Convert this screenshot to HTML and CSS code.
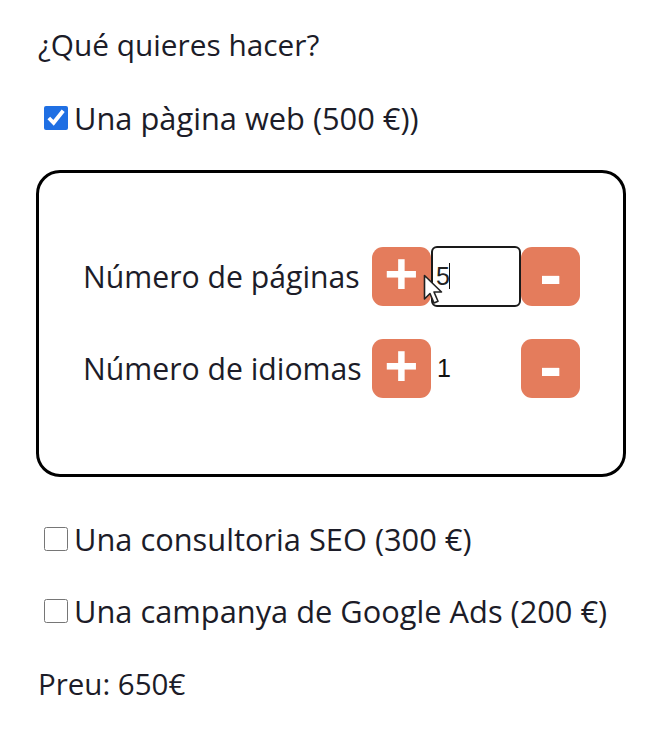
FILE: index.html
```html
<!DOCTYPE html>
<html lang="es">
<head>
<meta charset="utf-8">
<title>Pressupost</title>
<link rel="stylesheet" href="styles.css">
</head>
<body>
<main class="page">
  <p class="question">¿Qué quieres hacer?</p>

  <label class="option">
    <input type="checkbox" class="check" checked>
    <span>Una pàgina web (500 €))</span>
  </label>

  <section class="panel">
    <div class="row">
      <span class="row-label">Número de páginas</span>
      <button class="btn btn-plus" type="button">+</button>
      <span class="value-cell">
        <input class="value-input" type="text" value="5">
        <span class="caret" aria-hidden="true"></span>
        <svg class="cursor" width="22" height="34" viewBox="0 0 22 34" aria-hidden="true">
          <path d="M1.5 1.5 L1.5 25 L7 19.5 L11 29 L15 27.3 L11 18 L18.5 18 Z" fill="#fff" stroke="#222" stroke-width="1.6" stroke-linejoin="round"/>
        </svg>
      </span>
      <button class="btn btn-minus" type="button">-</button>
    </div>
    <div class="row">
      <span class="row-label">Número de idiomas</span>
      <button class="btn btn-plus" type="button">+</button>
      <span class="value-cell"><span class="value-text">1</span></span>
      <button class="btn btn-minus" type="button">-</button>
    </div>
  </section>

  <label class="option option-plain">
    <input type="checkbox" class="check">
    <span>Una consultoria SEO (300 €)</span>
  </label>

  <label class="option option-plain">
    <input type="checkbox" class="check">
    <span>Una campanya de Google Ads (200 €)</span>
  </label>

  <p class="price">Preu: 650€</p>
</main>
</body>
</html>
```
FILE: styles.css
```css
* { box-sizing: border-box; }

html, body {
  margin: 0;
  padding: 0;
  background: #fff;
}

body {
  font-family: "Open Sans", "Noto Sans", "Liberation Sans", sans-serif;
  font-size: 29.8px;
  color: #1c1c28;
}

.page {
  padding: 28px 0 0 38px;
  width: 666px;
}

.question {
  margin: 0;
  line-height: 34px;
}

.option {
  display: flex;
  align-items: center;
  gap: 6px;
  height: 34px;
  margin: 39px 0 0 6px;
  font-size: 30.8px;
  white-space: nowrap;
}

.check {
  width: 24px;
  height: 24px;
  margin: 0;
  flex: none;
  accent-color: #1f6fe3;
}

.panel {
  margin: 35px 0 0 -2px;
  width: 590px;
  height: 307px;
  border: 3px solid #000;
  border-radius: 24px;
  padding: 73px 0 0 44px;
  display: flex;
  flex-direction: column;
  gap: 32px;
}

.row {
  display: grid;
  grid-template-columns: 289px 59px 90px 59px;
  align-items: center;
  height: 60px;
}

.row-label {
  font-size: 30.2px;
  white-space: nowrap;
}

.btn {
  width: 59px;
  height: 59px;
  border: none;
  border-radius: 11px;
  background: #e47c5c;
  color: #fff;
  font-family: "Open Sans", "Liberation Sans", sans-serif;
  font-weight: 700;
  padding: 0;
  display: flex;
  align-items: center;
  justify-content: center;
  line-height: 1;
}

.btn-plus {
  font-size: 60px;
  padding-bottom: 6px;
}

.btn-minus {
  font-size: 66px;
  padding-bottom: 8px;
}

.value-cell {
  position: relative;
  height: 60px;
  display: flex;
  align-items: center;
}

.value-input {
  width: 90px;
  height: 61px;
  border: 2.5px solid #1a1a1a;
  border-radius: 6px;
  background: #fff;
  font-family: "Liberation Sans", sans-serif;
  font-size: 25px;
  color: #222;
  padding: 0 0 0 3px;
  outline: none;
}

.caret {
  position: absolute;
  left: 18px;
  top: 17px;
  width: 0;
  height: 26px;
  border-left: 1.5px solid #111;
}

.value-text {
  font-family: "Liberation Sans", sans-serif;
  font-size: 25px;
  padding-left: 6px;
  color: #111;
}

.cursor {
  position: absolute;
  left: -8px;
  top: 28px;
}

.option-plain {
  margin-top: 45px;
}

.option-plain + .option-plain {
  margin-top: 38px;
}

.price {
  margin: 39px 0 0 0;
  line-height: 34px;
  font-size: 29.5px;
}
```
